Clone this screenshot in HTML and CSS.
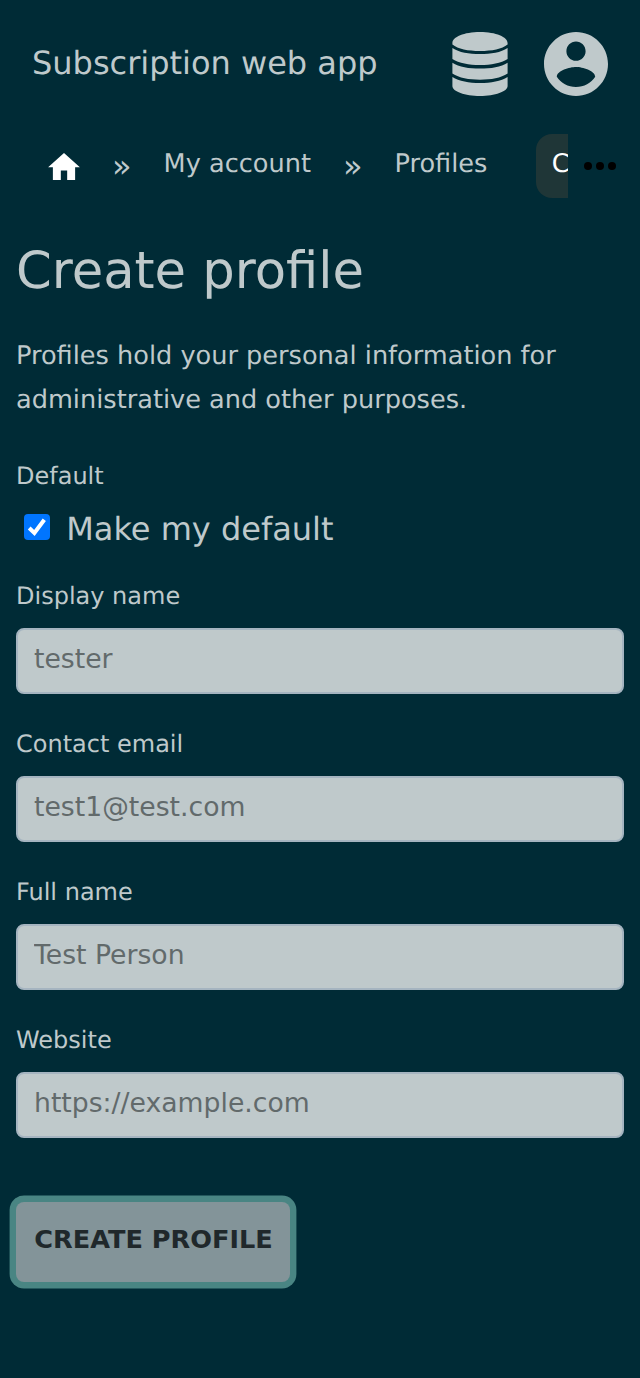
FILE: index.html
```html
<!DOCTYPE html>
<html lang="en">
<head>
<meta charset="utf-8">
<title>Create profile</title>
<link rel="stylesheet" href="styles.css">
</head>
<body>
<header class="topbar">
  <span class="brand">Subscription web app</span>
  <nav class="tools">
    <svg class="tool-icon" viewBox="0 0 64 64" aria-label="Data"><path d="M4.400 11C4.400 5 16 0 32 0S59.600 5 59.600 11V12.500C54 17 44 19 32 19S10 17 4.400 12.500ZM4.400 16C11 20.500 21 22 32 22S53 20.500 59.600 16V27C53 31.300 43 33 32 33S11 31.300 4.400 27ZM4.400 30.700C11 35 21 36.600 32 36.600S53 35 59.600 30.700V41.500C53 46 43 47.700 32 47.700S11 46 4.400 41.500ZM4.400 45C11 49.300 21 51 32 51S53 49.300 59.600 45V54C59.600 59.500 47 64 32 64S4.400 59.500 4.400 54Z"/></svg>
    <svg class="tool-icon" viewBox="2 2 20 20" aria-label="Account"><path d="M12 2C6.480 2 2 6.480 2 12s4.480 10 10 10 10-4.480 10-10S17.520 2 12 2zm0 3c1.660 0 3 1.340 3 3s-1.340 3-3 3-3-1.340-3-3 1.340-3 3-3zm0 14.200c-2.500 0-4.710-1.280-6-3.220.030-1.990 4-3.080 6-3.080 1.990 0 5.970 1.090 6 3.080-1.290 1.940-3.500 3.220-6 3.220z"/></svg>
  </nav>
</header>
<nav class="crumbs">
  <div class="trail">
    <svg class="home" viewBox="2 3 20 17" aria-label="Home"><path d="M10 20v-6h4v6h5v-8h3L12 3 2 12h3v8z"/></svg>
    <span class="sep">»</span>
    <a class="crumb">My account</a>
    <span class="sep">»</span>
    <a class="crumb">Profiles</a>
    <a class="crumb current">Create</a>
  </div>
  <svg class="more" viewBox="4 10 16 4" aria-label="More"><circle cx="6" cy="12" r="2"/><circle cx="12" cy="12" r="2"/><circle cx="18" cy="12" r="2"/></svg>
</nav>
<main class="content">
  <h1 class="heading">Create profile</h1>
  <p class="intro">Profiles hold your personal information for administrative and other purposes.</p>
  <form>
    <div class="label">Default</div>
    <label class="check"><input class="check-input" type="checkbox" checked><span class="box"><svg viewBox="0 0 26 26"><path d="M5.200 14 10.400 18.900 20.300 5.800"/></svg></span><span class="check-text">Make my default</span></label>
    <label class="field"><span class="label">Display name</span><input class="input" placeholder="tester"></label>
    <label class="field"><span class="label">Contact email</span><input class="input" placeholder="test1@test.com"></label>
    <label class="field"><span class="label">Full name</span><input class="input" placeholder="Test Person"></label>
    <label class="field"><span class="label">Website</span><input class="input" placeholder="https://example.com"></label>
    <button class="submit" type="button">CREATE PROFILE</button>
  </form>
</main>
</body>
</html>
```
FILE: styles.css
```css
* { box-sizing: border-box; }
body {
  margin: 0;
  min-height: 1378px;
  background: #002b36;
  color: #bfc9cb;
  font-family: "DejaVu Sans", sans-serif;
  text-rendering: geometricPrecision;
}
.topbar {
  display: flex;
  justify-content: space-between;
  align-items: center;
  height: 128px;
  padding: 0 32px;
}
.brand { font-size: 32px; line-height: 40px; padding-bottom: 2px; }
.tools { display: flex; gap: 32px; }
.tool-icon { width: 64px; height: 64px; fill: currentColor; }
.crumbs { display: flex; align-items: center; height: 76px; }
.trail {
  display: flex;
  align-items: center;
  width: 568px;
  height: 64px;
  padding-left: 48px;
  overflow: hidden;
  white-space: nowrap;
}
.home { flex: none; width: 32px; height: 27px; fill: #fff; }
.sep { flex: none; width: 83.600px; padding-bottom: 1px; text-align: center; font-size: 32px; line-height: 40px; }
.crumb { flex: none; font-size: 25.600px; line-height: 60px; height: 64px; }
.current {
  margin-left: 48.400px;
  padding: 0 16px;
  border-radius: 16px;
  background: #1f3637;
  color: #fff;
}
.more { width: 32px; height: 8px; margin-left: 16px; }
.content { padding: 35px 16px 0; }
.heading { margin: 0; font-size: 51.200px; font-weight: 400; line-height: 64px; }
.intro { margin: 31px 0 38px; font-size: 25.600px; line-height: 44px; }
.label { display: block; font-size: 24px; line-height: 32px; }
.check {
  display: flex;
  align-items: center;
  gap: 16.200px;
  height: 48px;
  margin: 12px 0 28px;
  padding-left: 8px;
  font-size: 32px;
}
.check-input { position: absolute; opacity: 0; }
.check-text { padding-top: 2px; }
.box { width: 26px; height: 26px; margin-bottom: 2px; border-radius: 4px; background: #0075ff; }
.box svg { display: block; fill: none; stroke: #fff; stroke-width: 4; }
.field { display: block; margin-bottom: 34px; }
.input {
  display: block;
  width: 100%;
  height: 66px;
  margin-top: 16px;
  padding: 0 16px 6px;
  border: 2px solid #a5b4c0;
  border-radius: 8px;
  background: #bfc9cb;
  color: #222;
  font: 26.667px "DejaVu Sans", sans-serif;
}
.input::placeholder { color: #626a6b; opacity: 1; }
.submit {
  display: block;
  width: 274px;
  height: 80px;
  margin-top: 64px;
  padding: 0 0 6px 1px;
  border: 0;
  border-radius: 8px;
  background: #839499;
  box-shadow: 0 0 0 6.400px #498583;
  color: #20282b;
  font: bold 25.600px "DejaVu Sans", sans-serif;
}
```
